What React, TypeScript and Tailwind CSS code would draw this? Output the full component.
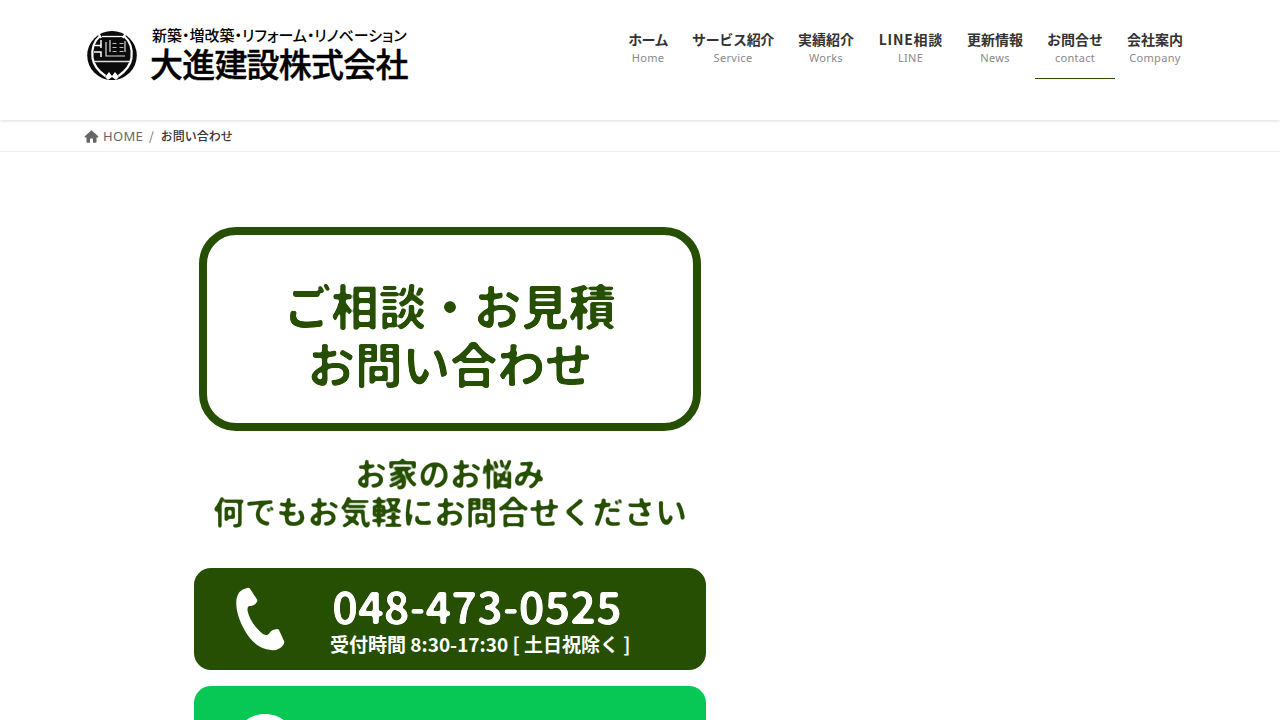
import React from "react";

const navItems = [
  { label: "ホーム", sub: "Home", box: "w-16", track: "tracking-[-0.7px]" },
  { label: "サービス紹介", sub: "Service", box: "w-[106px]", track: "tracking-[-0.35px]" },
  { label: "実績紹介", sub: "Works", box: "w-20", track: "" },
  { label: "LINE相談", sub: "LINE", box: "w-[89px]", track: "tracking-[0.7px] -mr-[0.7px]" },
  { label: "更新情報", sub: "News", box: "w-20", track: "" },
  { label: "お問合せ", sub: "contact", box: "w-20", track: "", active: true },
  { label: "会社案内", sub: "Company", box: "w-20", track: "" },
];

function RoundFilters() {
  return (
    <svg className="absolute h-0 w-0" aria-hidden="true">
      <filter id="round-lg" x="-5%" y="-10%" width="110%" height="120%" colorInterpolationFilters="sRGB">
        <feGaussianBlur stdDeviation="1.3" />
        <feComponentTransfer>
          <feFuncA type="linear" slope="4" intercept="-1.65" />
        </feComponentTransfer>
      </filter>
      <filter id="round-md" x="-5%" y="-10%" width="110%" height="120%" colorInterpolationFilters="sRGB">
        <feGaussianBlur stdDeviation="0.9" />
        <feComponentTransfer>
          <feFuncA type="linear" slope="2.7" intercept="-0.95" />
        </feComponentTransfer>
      </filter>
    </svg>
  );
}

function Emblem() {
  return (
    <svg viewBox="0 0 56 56" className="h-14 w-14 shrink-0">
      <ellipse cx="28" cy="27.500" rx="24.800" ry="24.500" fill="#0b0b0b" />
      <path d="M16 8C9 14 7.500 22 8.500 30c1 7 5 12.500 13 18" fill="none" stroke="#fff" strokeWidth="2.200" />
      <path d="M40 8C47 14 48.500 22 47.500 30c-1 7-5 12.500-13 18" fill="none" stroke="#fff" strokeWidth="2.200" />
      <path d="M13 3l4 7M43 3l-4 7" stroke="#fff" strokeWidth="2.200" />
      <path d="M18 8.500h22" stroke="#fff" strokeWidth="1.300" fill="none" />
      <path d="M10 17.500h7M17 12v8M10 24h7v5" stroke="#fff" strokeWidth="1.500" fill="none" />
      <path d="M22 14v14h19M26 12v12M41 13v11" stroke="#ddd" strokeWidth="1.200" fill="none" />
      <path d="M28.500 15.500h4M28.500 19.500h4M28.500 23.500h4M35.500 15.500h4M35.500 19.500h4M35.500 23.500h4" stroke="#bbb" strokeWidth="1" fill="none" />
      <path d="M10 33.500h36" stroke="#ddd" strokeWidth="1.300" />
      <path d="M21 49l4-5 3 4 3-4 4 5-4 4h-6Z" fill="#fff" />
      <path d="M24 52l4-3 4 3Z" fill="#0b0b0b" />
    </svg>
  );
}

export default function App() {
  return (
    <div className="h-[720px] w-full overflow-hidden bg-white font-['Noto_Sans_CJK_JP',sans-serif] text-[#333]">
      <RoundFilters />
      <header className="flex h-[120px] justify-between pr-[85px] pl-[84px] shadow-[0_1px_3px_rgba(0,0,0,0.14)]">
        <div className="flex pt-7">
          <Emblem />
          <div className="pl-[11px] text-black">
            <div className="-mt-0.5 h-[18px] pl-px text-[15px] leading-[18px] font-medium whitespace-nowrap [font-feature-settings:'palt']">
              新築・増改築・リフォーム・リノベーション
            </div>
            <div className="-mt-px -ml-px h-[40px] text-[33px] leading-[40px] font-medium tracking-[-0.8px] whitespace-nowrap [-webkit-text-stroke:0.4px_black]">
              大進建設株式会社
            </div>
          </div>
        </div>
        <nav className="flex h-[79px] pt-[30px]">
          {navItems.map((item) => (
            <a
              key={item.sub}
              className={`flex flex-col items-center border-b whitespace-nowrap ${item.box} ${item.active ? "border-[#264f04]" : "border-transparent"}`}
            >
              <span className={`text-[14px] leading-[18px] font-bold ${item.track}`}>{item.label}</span>
              <span className="mt-px font-['Noto_Sans',sans-serif] text-[11px] leading-[18px] tracking-[0.3px] text-[#888]">{item.sub}</span>
            </a>
          ))}
        </nav>
      </header>
      <div className="flex h-8 items-center border-b border-[#eee] pt-px pl-[84px] text-[12px] whitespace-nowrap">
        <svg viewBox="0 0 14 13" className="mr-1 h-[13px] w-[15px]" fill="#666">
          <path d="M7 .3L.3 6.2c-.5.6-.1 1.200.5 1.200H2v4.300c0 .6.4 1 1 1h2.500V9.300c0-.5.3-.8.8-.8h1.400c.5 0 .8.3.8.8v3.400H11c.6 0 1-.4 1-1V7.400h1.200c.6 0 1-.6.5-1.200z" />
        </svg>
        <span className="mt-px font-['Noto_Sans',sans-serif] text-[13px] tracking-[0.3px] text-[#666]">HOME</span>
        <span className="mx-1.5 text-[#666]">/</span>
        <span className="ml-px font-medium">お問い合わせ</span>
      </div>
      <main className="ml-[194px] w-[512px] text-[#264f04]">
        <div className="pt-[75px]">
          <h1 className="mx-[5px] flex h-[204px] flex-col items-center justify-center rounded-[37px] border-8 border-[#264f04] pt-[10px] text-[47.500px] leading-[58px] font-bold whitespace-nowrap">
            <span className="[filter:url(#round-lg)]">ご相談・お見積</span>
            <span className="[filter:url(#round-lg)]">お問い合わせ</span>
          </h1>
        </div>
        <div className="mt-[22px] flex flex-col items-center text-[31.600px] leading-[38px] font-bold whitespace-nowrap">
          <span className="[filter:url(#round-md)]">お家のお悩み</span>
          <span className="[filter:url(#round-md)]">何でもお気軽にお問合せください</span>
        </div>
        <a className="mt-[39px] flex h-[102px] rounded-[17px] bg-[#264f04] text-white">
          <svg viewBox="0 0 120 102" className="h-[102px] w-[120px] shrink-0" fill="white">
            <path d="M52.500 20.200Q55 19 56.200 21L63 31.500Q64 33 62 35.200Q60 38 55 38Q53 39 53.600 43Q56 54 66 63.500Q70 67.500 73 67Q75 66.600 76 64.600Q77 62 82 61.200Q84 60.500 85 62L90 73Q91 75 88.500 78Q84 83 77 82C66 81 57 74 50.500 62C44 50 41.500 40 42.500 31Q44 22 52.500 20.200Z" />
          </svg>
          <div className="flex-1 whitespace-nowrap">
            <div className="mt-[10px] h-[54px] pl-[18px] text-[44.500px] leading-[54px] font-bold tracking-[-0.5px] [filter:url(#round-lg)]">048-473-0525</div>
            <div className="h-6 pl-4 text-[19px] leading-6 font-bold">受付時間 8:30-17:30 [ 土日祝除く ]</div>
          </div>
        </a>
        <a className="mt-4 block h-[102px] rounded-[17px] bg-[#07c755]">
          <svg viewBox="0 0 142 102" className="h-[102px] w-[142px]" fill="white">
            <path d="M71 28C55.500 28 43 38.500 43 52c0 12 10 21 24 23 3 1 2 3 1 9 10-5 31-19 31-32 0-13.500-12.500-24-28-24Z" />
          </svg>
        </a>
      </main>
    </div>
  );
}
